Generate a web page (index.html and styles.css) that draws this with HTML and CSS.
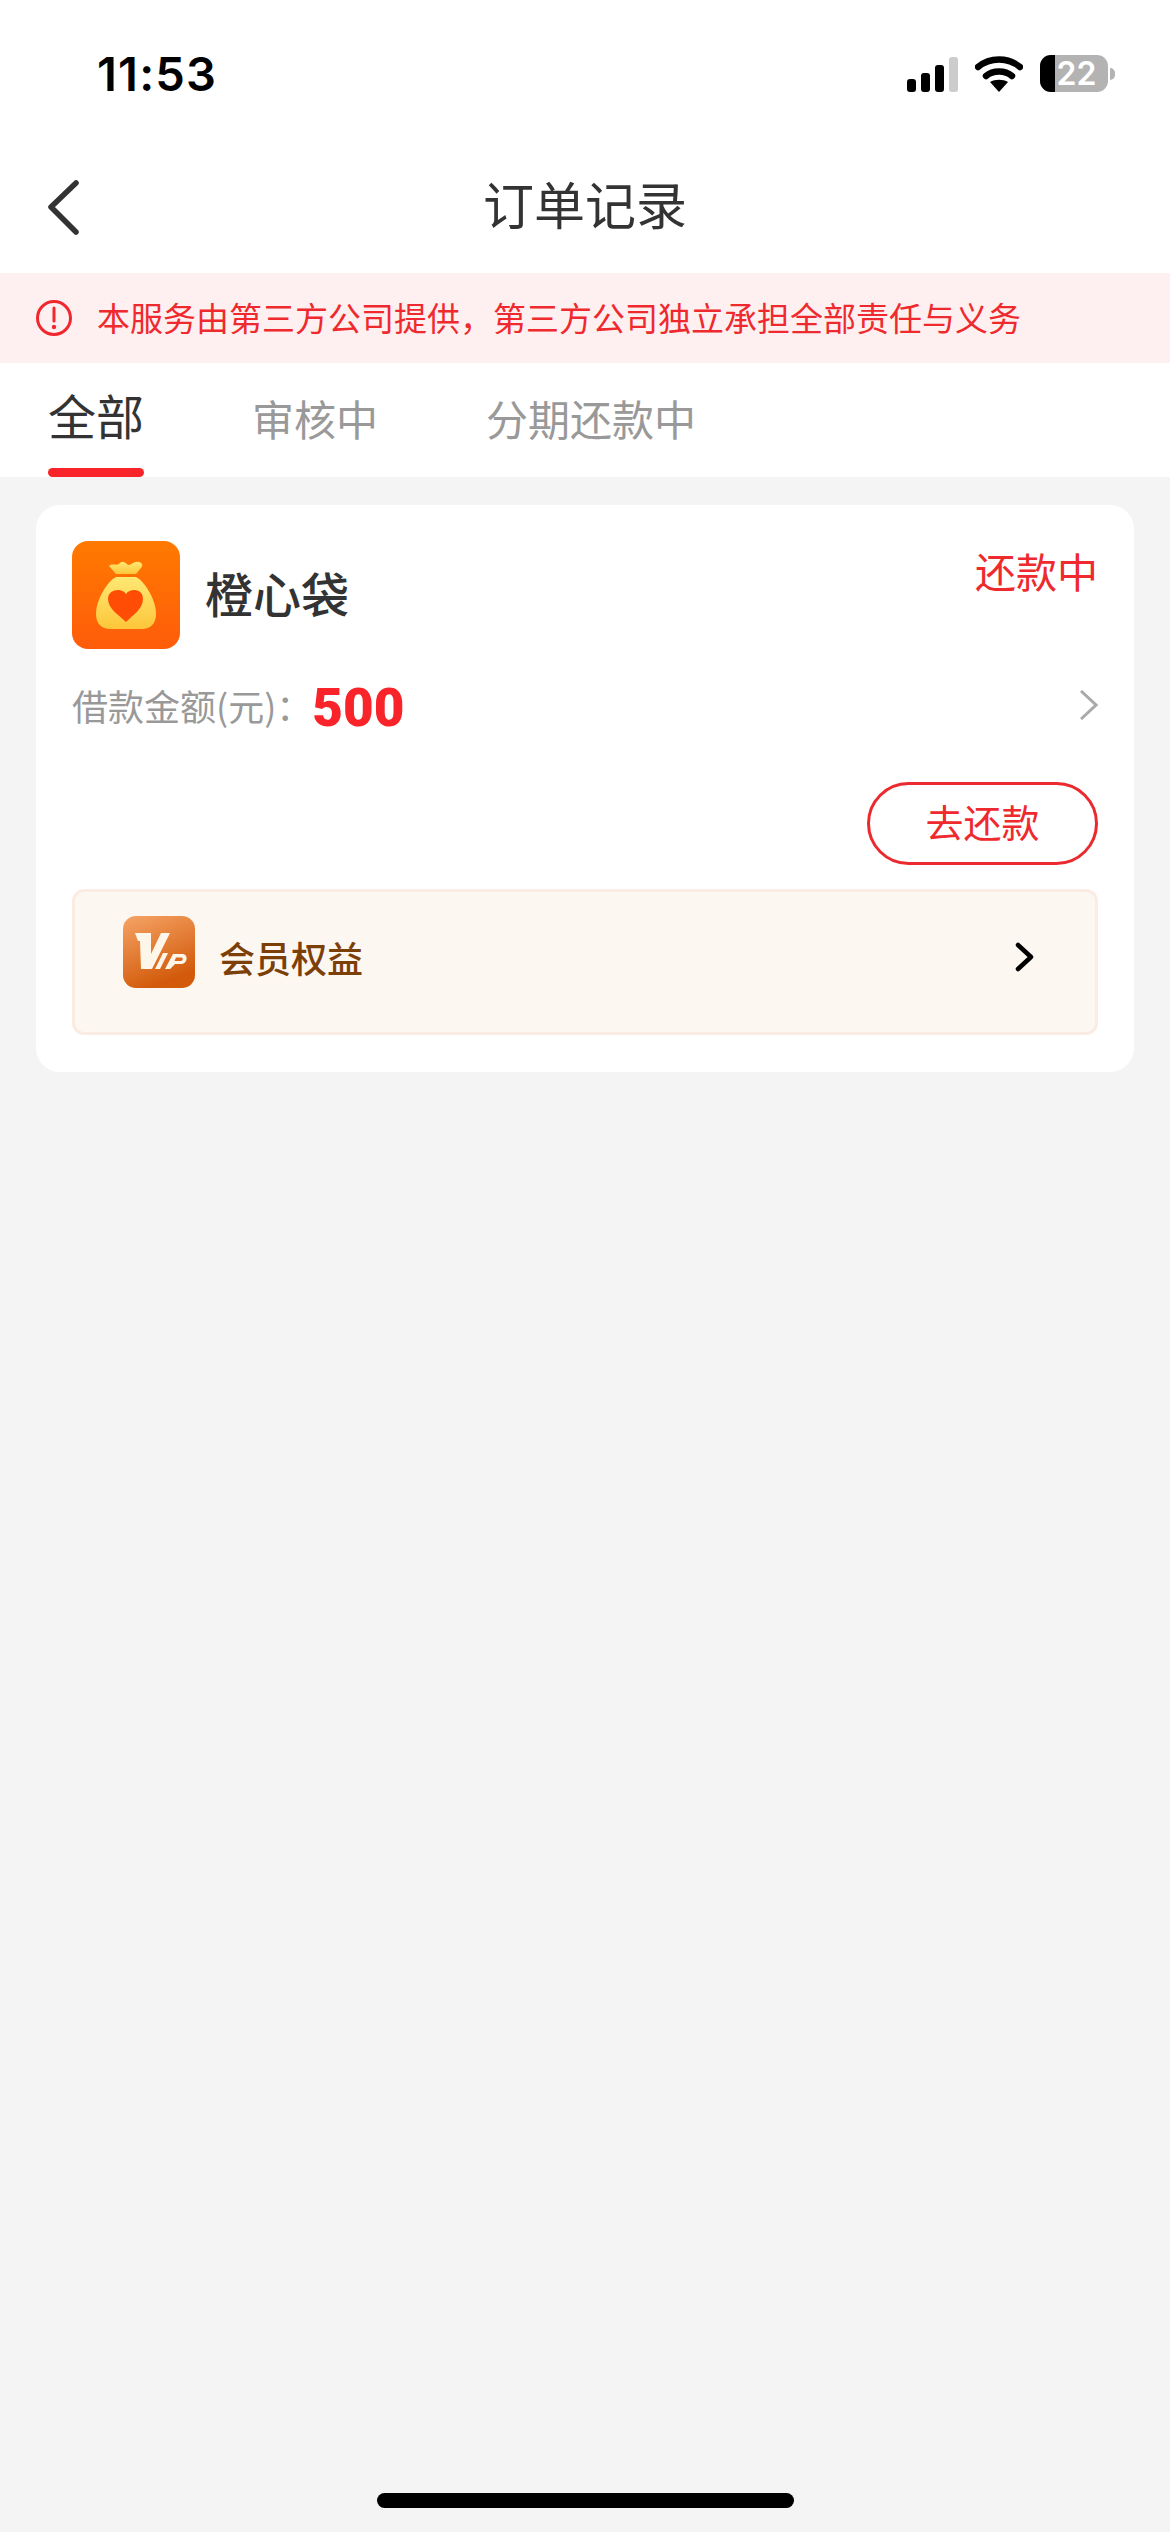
FILE: index.html
```html
<!DOCTYPE html>
<html lang="zh-CN">

<head>
    <meta charset="utf-8">
    <title>订单记录</title>
    <link rel="stylesheet" href="styles.css">
</head>

<body>
    <div class="status-bar">
        <span class="clock">11:53</span>
        <div class="status-icons">
            <svg class="signal" width="51" height="35" viewBox="0 0 51 35">
                <rect x="0" y="22" width="9" height="13" rx="3" fill="#000"/>
                <rect x="14" y="16" width="9" height="19" rx="3" fill="#000"/>
                <rect x="28" y="8" width="9" height="27" rx="3" fill="#000"/>
                <rect x="42" y="0" width="9" height="35" rx="3" fill="#ccc"/>
            </svg>
            <svg class="wifi" width="48" height="36" viewBox="0 0 48 36">
                <path d="M3 11 C15 1 33 1 45 11" fill="none" stroke="#000" stroke-width="6.5" stroke-linecap="round"/>
                <path d="M11 20 C18 14 30 14 37 20" fill="none" stroke="#000" stroke-width="6.5" stroke-linecap="round"/>
                <path d="M15 26 C20 23 28 23 33 26 L24 36 Z" fill="#000"/>
            </svg>
            <div class="battery">
                <div class="battery-body">
                    <div class="battery-fill"></div>
                    <span class="battery-num">22</span>
                </div>
                <div class="battery-cap"></div>
            </div>
        </div>
    </div>

    <div class="nav">
        <svg class="back" width="34" height="56" viewBox="0 0 34 56">
            <path d="M30 4 L5 28 L30 53" fill="none" stroke="#333" stroke-width="5.5" stroke-linecap="round" stroke-linejoin="round"/>
        </svg>
        <h1 class="title">订单记录</h1>
    </div>

    <div class="notice">
        <svg width="38" height="38" viewBox="0 0 38 38">
            <circle cx="19" cy="19" r="16.5" fill="none" stroke="#f0272d" stroke-width="3"/>
            <path d="M19 9 V22" stroke="#f0272d" stroke-width="3" stroke-linecap="round"/>
            <circle cx="19" cy="28" r="2.2" fill="#f0272d"/>
        </svg>
        <span class="notice-text">本服务由第三方公司提供，第三方公司独立承担全部责任与义务</span>
    </div>

    <div class="tabs">
        <div class="tab active">全部</div>
        <div class="tab">审核中</div>
        <div class="tab">分期还款中</div>
    </div>

    <div class="content">
        <div class="card">
            <div class="card-head">
                <div class="product">
                    <svg class="logo" width="108" height="108" viewBox="0 0 108 108">
                        <defs>
                            <linearGradient id="logoBg" x1="0" y1="0" x2="0" y2="1">
                                <stop offset="0" stop-color="#ff7a00"/>
                                <stop offset="1" stop-color="#fe5c0a"/>
                            </linearGradient>
                            <linearGradient id="bagFill" x1="0" y1="0" x2="0" y2="1">
                                <stop offset="0" stop-color="#ffe873"/>
                                <stop offset="1" stop-color="#fdc63a"/>
                            </linearGradient>
                        </defs>
                        <rect width="108" height="108" rx="16" fill="url(#logoBg)"/>
                        <path d="M37 25 C40 22 44 25 47 23 C50 19 53 21 56 24 C60 24 62 20 67 21 C71 22 71 25 69 27 L64 33 L44 33 Z" fill="url(#bagFill)"/>
                        <path d="M44 36 L64 36 C72 40 84 58 84 73 C84 83 78 88 70 88 L38 88 C30 88 24 83 24 73 C24 58 36 40 44 36 Z" fill="url(#bagFill)"/>
                        <path d="M54 81 C47 74 36 68 36 58 C36 52 41 49 46 49 C49 49 52 50 54 53 C56 50 59 49 62 49 C67 49 71 52 71 58 C71 68 61 74 54 81 Z" fill="#ff4d06"/>
                    </svg>
                    <span class="product-name">橙心袋</span>
                </div>
                <span class="state">还款中</span>
            </div>

            <div class="amount-row">
                <span class="amount-label">借款金额(元)：</span>
                <span class="amount">500</span>
                <svg class="amount-arrow" width="18" height="30" viewBox="0 0 18 30">
                    <path d="M1 1 L16 15 L1 29" fill="none" stroke="#aaa" stroke-width="3"/>
                </svg>
            </div>

            <div class="actions">
                <div class="repay-btn">去还款</div>
            </div>

            <div class="vip">
                <svg class="vip-logo" width="72" height="72" viewBox="0 0 72 72">
                    <defs>
                        <linearGradient id="vipBg" x1="0" y1="0" x2="0.4" y2="1">
                            <stop offset="0" stop-color="#f6a466"/>
                            <stop offset="1" stop-color="#d25a0a"/>
                        </linearGradient>
                    </defs>
                    <rect width="72" height="72" rx="13" fill="url(#vipBg)"/>
                    <path d="M12 17 L28 17 L28 38 L38 17 L47 17 L29 53 L18 53 L17 25 L15 25 Z" fill="#fff6ea"/>
                    <path d="M32 53 L40 37 L45 37 L37 53 Z" fill="#fff6ea"/>
                    <path d="M42 53 L50 38 L60 38 C65 38 65 47 59 48 L52 48 L47 53 Z M53 41.5 L51.5 45 L58 45 C60 45 60.5 41.5 58.5 41.5 Z" fill="#fff6ea" fill-rule="evenodd"/>
                </svg>
                <span class="vip-text">会员权益</span>
                <svg class="vip-arrow" width="20" height="30" viewBox="0 0 20 30">
                    <path d="M3 3 L16 15 L3 27" fill="none" stroke="#000" stroke-width="4.5" stroke-linecap="round" stroke-linejoin="round"/>
                </svg>
            </div>
        </div>
    </div>

    <div class="home-bar"></div>
</body>

</html>
```

FILE: styles.css
```css
* {
    box-sizing: border-box;
}

html,
body {
    margin: 0;
    padding: 0;
}

body {
    width: 1170px;
    height: 2532px;
    display: flex;
    flex-direction: column;
    background-color: #f4f4f4;
    font-family: "Noto Sans CJK SC", "Liberation Sans", sans-serif;
    color: #333;
}

/* status bar */
.status-bar {
    height: 148px;
    flex: none;
    display: flex;
    justify-content: space-between;
    align-items: flex-start;
    padding: 46px 55px 0 97px;
    background-color: #fff;
}

.clock {
    font-family: "Inter", "Liberation Sans", sans-serif;
    font-size: 47px;
    font-weight: 600;
    line-height: 56px;
    color: #000;
    letter-spacing: 1.2px;
}

.status-icons {
    display: flex;
    align-items: flex-start;
    padding-top: 9px;
}

.signal {
    margin: 2px 0 0 0;
}

.wifi {
    margin: 1px 0 0 17px;
}

.battery {
    display: flex;
    align-items: center;
    margin: 0 0 0 17px;
}

.battery-body {
    width: 68px;
    height: 37px;
    border-radius: 11px;
    background-color: #b3b3b3;
    position: relative;
    text-align: center;
}

.battery-fill {
    position: absolute;
    left: 0;
    top: 0;
    bottom: 0;
    width: 15px;
    border-radius: 11px 0 0 11px;
    background-color: #000;
}

.battery-num {
    position: relative;
    display: block;
    font-family: "Inter", "Liberation Sans", sans-serif;
    font-size: 32px;
    font-weight: 600;
    line-height: 37px;
    color: #fff;
    padding-left: 5px;
}

.battery-cap {
    width: 5px;
    height: 12px;
    margin-left: 2px;
    border-radius: 0 6px 6px 0;
    background-color: #b3b3b3;
}

/* nav */
.nav {
    height: 125px;
    flex: none;
    display: flex;
    align-items: center;
    justify-content: center;
    position: relative;
    background-color: #fff;
}

.back {
    position: absolute;
    left: 46px;
    top: 31px;
}

.title {
    margin: 0 0 16px;
    font-size: 51px;
    font-weight: 400;
    line-height: 60px;
    color: #333;
}

/* notice */
.notice {
    height: 90px;
    flex: none;
    display: flex;
    align-items: center;
    gap: 24px;
    padding-left: 35px;
    background-color: #fef0f0;
    color: #ee2a2e;
    font-size: 33px;
}

.notice-text {
    margin-bottom: 3px;
}

/* tabs */
.tabs {
    height: 114px;
    flex: none;
    display: flex;
    padding-left: 48px;
    gap: 108px;
    background-color: #fff;
}

.tab {
    position: relative;
    padding-top: 22px;
    font-size: 42px;
    line-height: 66px;
    color: #999;
}

.tab.active {
    padding-top: 20px;
    font-size: 48px;
    line-height: 62px;
    color: #333;
}

.tab.active::after {
    content: "";
    position: absolute;
    left: 0;
    right: 0;
    bottom: 0;
    height: 9px;
    border-radius: 5px;
    background-color: #f9242a;
}

/* order card */
.content {
    padding: 28px 36px 0;
}

.card {
    height: 567px;
    padding: 36px 36px 0;
    border-radius: 24px;
    background-color: #fff;
}

.card-head {
    display: flex;
    justify-content: space-between;
    align-items: flex-start;
}

.product {
    display: flex;
    align-items: center;
    gap: 25px;
}

.product-name {
    margin-bottom: 6px;
    font-size: 48px;
    font-weight: 500;
    color: #333;
}

.state {
    font-size: 41px;
    line-height: 58px;
    color: #ee2a2e;
}

.amount-row {
    display: flex;
    align-items: center;
    height: 56px;
    margin-top: 28px;
}

.amount-label {
    font-size: 36px;
    color: #999;
}

.amount {
    padding-top: 5px;
    font-family: "Roboto", "Liberation Sans", sans-serif;
    font-size: 53px;
    font-weight: 900;
    color: #f9242a;
}

.amount-arrow {
    margin-left: auto;
}

.actions {
    display: flex;
    justify-content: flex-end;
    margin-top: 49px;
}

.repay-btn {
    width: 231px;
    height: 83px;
    border: 3px solid #ea2a2e;
    border-radius: 42px;
    font-size: 38px;
    line-height: 72px;
    text-align: center;
    color: #ee2a2e;
}

.vip {
    height: 146px;
    margin-top: 24px;
    display: flex;
    align-items: flex-start;
    padding: 24px 60px 0 48px;
    border: 3px solid #fbece3;
    border-radius: 12px;
    background-color: #fdf7f2;
}

.vip-text {
    margin: 16px 0 0 24px;
    font-size: 36px;
    font-weight: 500;
    line-height: 50px;
    color: #7d3f08;
}

.vip-arrow {
    margin: 26px 0 0 auto;
}

.home-bar {
    width: 417px;
    height: 15px;
    margin: auto auto 24px;
    border-radius: 8px;
    background-color: #000;
}
```
